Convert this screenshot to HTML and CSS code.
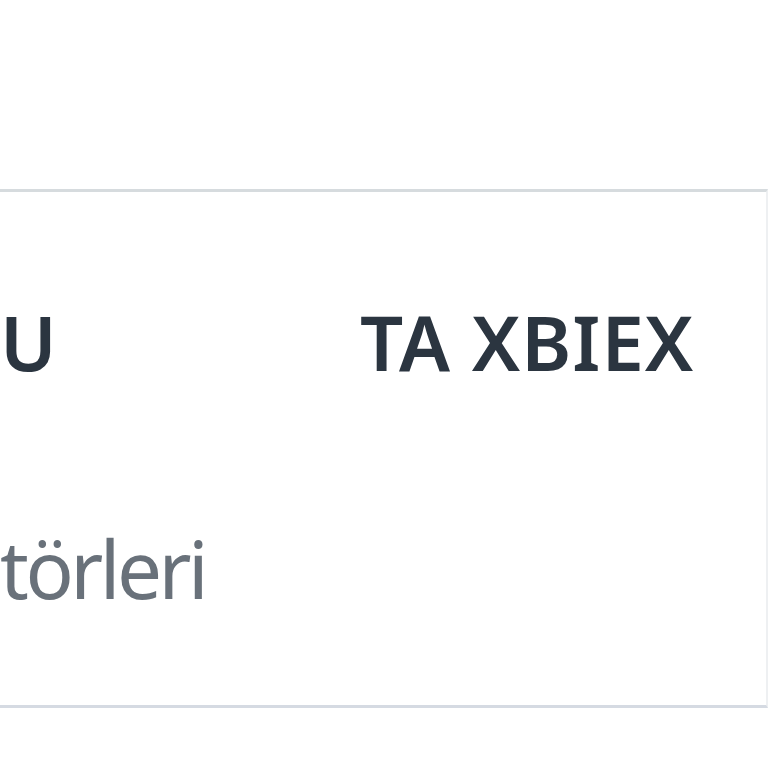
FILE: index.html
```html
<!DOCTYPE html>
<html lang="tr">
<head>
    <meta charset="UTF-8">
    <meta name="viewport" content="width=device-width, initial-scale=1.0">
    <title>Sektörler</title>
    <link rel="stylesheet" href="styles.css">
</head>
<body>
    <div class="page">
        <div class="table">
            <div class="col">
                <h2>U</h2>
                <p>törleri</p>
            </div>
            <div class="col">
                <h2>TA XBIEX</h2>
            </div>
        </div>
    </div>
</body>
</html>
```

FILE: styles.css
```css
* {
    margin: 0;
    padding: 0;
    box-sizing: border-box;
}

body {
    font-family: "Noto Sans", "Open Sans", sans-serif;
    background-color: #ffffff;
    overflow: hidden;
}
.page {
    padding-top: 189px;
}
.table {
    display: grid;
    grid-template-columns: 360px 1fr;
    height: 519px;
    border-top: 3px solid #d6dbde;
    border-bottom: 3px solid #d5dae2;
    border-right: 2px solid #eef0f2;
}
.col {
    padding-top: 112px;
}
h2 {
    font-size: 76px;
    line-height: 76px;
    font-weight: 600;
    letter-spacing: 1px;
    color: #2b3540;
    white-space: nowrap;
}
p {
    margin-top: 148px;
    font-size: 80px;
    line-height: 80px;
    letter-spacing: -3.5px;
    color: #69717a;
    white-space: nowrap;
}
```
